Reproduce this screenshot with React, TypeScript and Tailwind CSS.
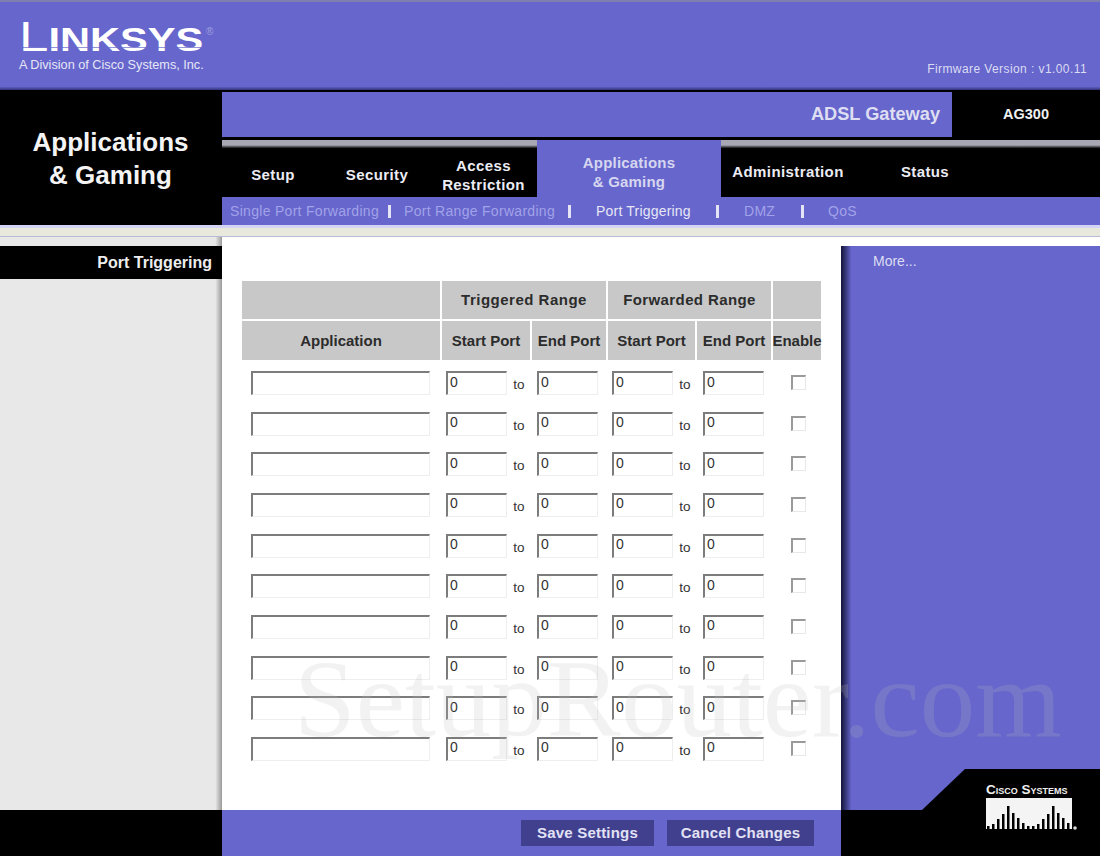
const rows = [0, 1, 2, 3, 4, 5, 6, 7, 8, 9];

const ciscoBars = [3, 5, 10, 15, 23, 16, 11, 6, 3, 3, 5, 10, 15, 23, 16, 11, 6];

const headCell = "flex items-center justify-center bg-[#c8c8c8] text-[15px] font-bold text-[#2c2c2c]";
const sunken = "border-t-2 border-l-2 border-r border-b border-t-[#7c7c7c] border-l-[#7c7c7c] border-r-[#eeeeee] border-b-[#eeeeee] bg-white";
const tabBlack = "bg-gradient-to-b from-[#a8a8b4] from-[9%] to-black to-[16%]";

function PortInput() {
  return (
    <input
      readOnly
      defaultValue="0"
      className={`h-6 w-[61px] pl-[2px] pb-[4px] text-[14px] text-[#333333] outline-none ${sunken}`}
    />
  );
}

function To() {
  return <span className="w-[30px] pt-[4px] pr-[6px] text-center text-[13.5px] text-[#333333]">to</span>;
}

function TriggerRow() {
  return (
    <div className="flex h-[40.67px] items-start pl-[9px]">
      <input readOnly className={`h-6 w-[179px] outline-none ${sunken}`} />
      <div className="ml-4 flex items-start">
        <PortInput />
        <To />
        <PortInput />
      </div>
      <div className="ml-[14px] flex items-start">
        <PortInput />
        <To />
        <PortInput />
      </div>
      <input
        type="checkbox"
        readOnly
        className="ml-[27px] mt-1 h-[15px] w-[15px] appearance-none border-t-2 border-l-2 border-r border-b border-t-[#9a9a9a] border-l-[#9a9a9a] border-r-[#e8e8e8] border-b-[#e8e8e8] bg-white"
      />
    </div>
  );
}

function SubSep() {
  return <span className="w-[3px] h-[13px] bg-[#e4e4f6]" />;
}

export default function App() {
  return (
    <div className="relative flex h-[856px] w-[1100px] flex-col overflow-hidden bg-white font-['Liberation_Sans',Arial,sans-serif]">
      {/* logo strip */}
      <div className="relative h-[90px] border-t-2 border-t-[#8080b0] bg-gradient-to-b from-[#6666cc] from-[96%] to-[#34347a]">
        <div className="absolute left-[19px] top-[20px] flex h-[30px] origin-left scale-x-[1.26] items-end font-bold leading-none text-white">
          <span className="text-[42px] font-normal leading-[30px]">L</span>
          <span className="text-[33px] leading-[24px]">INKSYS</span>
        </div>
        <div className="absolute left-[22px] top-[45px] h-px w-[182px] bg-[#6666cc]/70" />
        <span className="absolute left-[206px] top-[22px] text-[10px] text-[#a0a0dc]">®</span>
        <span className="absolute left-[19px] top-[55px] text-[12.7px] leading-[16px] text-[#e6e6f6]">
          A Division of Cisco Systems, Inc.
        </span>
        <span className="absolute right-[13px] top-[60px] text-[12px] leading-[14px] tracking-[0.42px] text-[#dcdcf2]">
          Firmware Version : v1.00.11
        </span>
      </div>

      {/* title + tabs */}
      <div className="flex h-[135px]">
        <div className="flex w-[221px] items-center justify-center bg-black pt-[21px] pb-[18px] text-center text-[26px] font-bold leading-[33px] text-[#f4f4f4]">
          Applications
          <br />
          &amp; Gaming
        </div>
        <div className="flex flex-1 flex-col bg-black pl-px">
          <div className="mt-[2px] flex h-[45px]">
            <div className="flex flex-1 items-center justify-end bg-[#6666cc] pr-[12px] text-[18.2px] font-bold text-[#dedef2]">
              ADSL Gateway
            </div>
            <div className="flex w-[148px] items-center justify-center bg-black text-[14.5px] font-bold text-[#f0f0f0]">
              AG300
            </div>
          </div>
          <div className="h-[3px] bg-black" />
          <div className="flex h-[57px] text-[15px] font-bold leading-[19px] tracking-[0.4px] text-[#ececf4]">
            <div className={`flex w-[315px] pt-[13px] ${tabBlack}`}>
              <div className="flex w-[102px] items-center justify-center pb-[2px]">Setup</div>
              <div className="flex w-[106px] items-center justify-center pb-[2px]">Security</div>
              <div className="flex w-[107px] items-center justify-center text-center">
                Access
                <br />
                Restriction
              </div>
            </div>
            <div className="flex w-[184px] items-center justify-center bg-[#6666cc] pt-[7px] text-center tracking-[0.2px] text-[#d6d6f0]">
              Applications
              <br />
              &amp; Gaming
            </div>
            <div className={`flex flex-1 pt-[7px] ${tabBlack}`}>
              <div className="flex w-[134px] items-center justify-center pb-[1px]">Administration</div>
              <div className="flex w-[140px] items-center justify-center pb-[1px]">Status</div>
            </div>
          </div>
          <div className="flex h-[28px] items-center bg-[#6666cc] pl-2 text-[14px] tracking-[0.3px] text-[#a2a2e8]">
            <span className="w-[158px]">Single Port Forwarding</span>
            <SubSep />
            <span className="ml-[13px] w-[164px]">Port Range Forwarding</span>
            <SubSep />
            <span className="ml-[25px] w-[120px] tracking-[0.2px] text-[#e6e6f6]">Port Triggering</span>
            <SubSep />
            <span className="ml-[25px] w-[57px]">DMZ</span>
            <SubSep />
            <span className="ml-[24px]">QoS</span>
          </div>
        </div>
      </div>

      {/* light band */}
      <div className="h-[12px] border-t-[3px] border-b border-t-[#d4d4f4] border-b-[#b8b8d8] bg-[#e8e8dc]" />

      {/* body */}
      <div className="flex h-[573px]">
        <div className="w-[222px] bg-gradient-to-r from-[#e8e8e8] from-[97%] to-[#9a9a9a] pt-[9px]">
          <div className="flex h-[33px] items-center justify-end bg-black pr-[10px] text-[16px] font-bold text-[#eeeeee]">
            Port Triggering
          </div>
        </div>

        <div className="w-[619px] bg-white pt-[44px] pl-5">
          <div className="grid w-[579px] grid-cols-[198px_88px_74px_87px_74px_48px] grid-rows-[38px_39px] gap-[2px]">
            <div className={headCell} />
            <div className={`${headCell} col-span-2 tracking-[0.5px]`}>Triggered Range</div>
            <div className={`${headCell} col-span-2 tracking-[0.4px]`}>Forwarded Range</div>
            <div className={headCell} />
            <div className={`${headCell} pt-[2px]`}>Application</div>
            <div className={`${headCell} pt-[2px]`}>Start Port</div>
            <div className={`${headCell} pt-[2px]`}>End Port</div>
            <div className={`${headCell} pt-[2px]`}>Start Port</div>
            <div className={`${headCell} pt-[2px]`}>End Port</div>
            <div className={`${headCell} pt-[2px]`}>Enable</div>
          </div>
          <div className="mt-[11px]">
            {rows.map((r) => (
              <TriggerRow key={r} />
            ))}
          </div>
        </div>

        <div className="flex flex-1 flex-col bg-white pt-[9px]">
          <div className="relative flex-1 bg-gradient-to-r from-[#14143c] from-0% to-[#6666cc] to-[4%] pl-[32px] pt-[5px] text-[14px] text-[#dcdcf2]">
            More...
            <svg className="absolute bottom-0 left-0" width="259" height="41" viewBox="0 0 259 41">
              <polygon points="124,0 259,0 259,41 81,41" fill="#000000" />
            </svg>
          </div>
        </div>
      </div>

      {/* footer */}
      <div className="flex h-[46px]">
        <div className="w-[222px] bg-black" />
        <div className="flex w-[619px] items-start justify-end gap-[13px] bg-[#6666cc] pr-[27px] pt-[10px] text-[15px] font-bold tracking-[0.2px] text-[#e2e2f4]">
          <button type="button" className="h-[26px] w-[133px] bg-[#40408f]">
            Save Settings
          </button>
          <button type="button" className="h-[26px] w-[147px] bg-[#40408f]">
            Cancel Changes
          </button>
        </div>
        <div className="relative flex-1 bg-black">
          <div className="absolute bottom-[25px] left-[144px] w-[92px]">
            <div className="whitespace-nowrap pl-px text-[13.5px] font-bold leading-[14px] text-[#f0f0f0] [font-variant:small-caps]">
              Cisco Systems
            </div>
            <svg className="mt-[1px]" width="92" height="33" viewBox="0 0 92 33">
              <rect x="1" y="0" width="86" height="33" fill="#f4f4f4" />
              {ciscoBars.map((h, i) => (
                <rect key={i} x={2 + i * 5} y={31 - h} width="2.5" height={h} fill="#000000" />
              ))}
              <rect x="1" y="31" width="86" height="2" fill="#000000" />
              <circle cx="90" cy="30" r="1.8" fill="#d8d8d8" />
            </svg>
          </div>
        </div>
      </div>

      {/* watermark */}
      <span className="pointer-events-none absolute left-[294px] top-[643px] font-['Liberation_Serif',serif] text-[111px] leading-[111px] text-[#c0c0c0]/20">
        SetupRouter.com
      </span>
    </div>
  );
}
